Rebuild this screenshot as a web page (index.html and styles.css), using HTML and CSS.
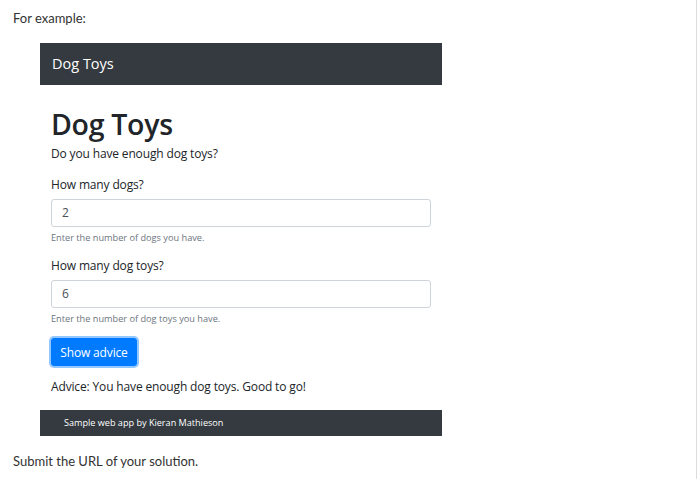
FILE: index.html
```html
<!DOCTYPE html>
<html>
<head>
<meta charset="utf-8">
<link rel="stylesheet" href="styles.css">
</head>
<body>
<div class="page">
  <p class="outer-text top">For example:</p>
  <div class="app">
    <div class="navbar">Dog Toys</div>
    <div class="content">
      <h1 class="title">Dog Toys</h1>
      <p class="lead">Do you have enough dog toys?</p>
      <div class="group">
        <label class="label">How many dogs?</label>
        <div class="input">2</div>
        <div class="help">Enter the number of dogs you have.</div>
      </div>
      <div class="group">
        <label class="label">How many dog toys?</label>
        <div class="input">6</div>
        <div class="help">Enter the number of dog toys you have.</div>
      </div>
      <button class="btn">Show advice</button>
      <p class="advice">Advice: You have enough dog toys. Good to go!</p>
    </div>
    <div class="footer">Sample web app by Kieran Mathieson</div>
  </div>
  <p class="outer-text bottom">Submit the URL of your solution.</p>
</div>
</body>
</html>
```
FILE: styles.css
```css
html, body {
  margin: 0;
  padding: 0;
  background: #fff;
}
.page {
  width: 697px;
  height: 479px;
  box-sizing: border-box;
  border-right: 1px solid #dcdcdc;
  padding-top: 8px;
  font-family: "Lato", "Open Sans", sans-serif;
}
.outer-text {
  margin: 0;
  padding-left: 13px;
  font-size: 13px;
  line-height: 20px;
  color: #333;
}
.app {
  margin-left: 40px;
  width: 402px;
  margin-top: 15px;
  font-family: "Open Sans", "Noto Sans", sans-serif;
  color: #212529;
}
.navbar {
  height: 42px;
  background: #343a40;
  color: #fff;
  font-size: 14.5px;
  line-height: 42px;
  padding-left: 12px;
}
.content {
  padding: 0 11px;
  display: flex;
  flex-direction: column;
  align-items: flex-start;
}
.title {
  margin: 21px 0 0;
  font-size: 28.5px;
  line-height: 36px;
  font-weight: 600;
  letter-spacing: -0.3px;
  color: #212529;
}
.lead {
  margin: 2px 0 0;
  font-size: 12px;
  letter-spacing: -0.15px;
  line-height: 20px;
}
.group {
  margin-top: 11px;
  width: 380px;
}
.label {
  display: block;
  font-size: 12px;
  letter-spacing: -0.15px;
  line-height: 20px;
  margin-bottom: 4px;
}
.input {
  box-sizing: border-box;
  height: 28px;
  width: 380px;
  border: 1px solid #ced4da;
  border-radius: 3px;
  padding-left: 10px;
  font-size: 12px;
  line-height: 26px;
  color: #495057;
}
.help {
  margin-top: 4px;
  font-size: 9.2px;
  line-height: 14px;
  color: #6c757d;
}
.btn {
  margin-top: 12px;
  height: 28px;
  width: 86px;
  border: 1px solid #007bff;
  background: #007bff;
  color: #fff;
  border-radius: 3px;
  font-family: "Open Sans", "Noto Sans", sans-serif;
  font-size: 12px;
  letter-spacing: -0.15px;
  padding: 0;
  box-shadow: 0 0 0 2px rgba(38, 143, 255, 0.5);
}
.advice {
  margin: 11px 0 13px;
  font-size: 12px;
  letter-spacing: -0.15px;
  line-height: 20px;
}
.footer {
  height: 26px;
  background: #343a40;
  color: #fff;
  font-size: 9.1px;
  line-height: 26px;
  padding-left: 24px;
}
.bottom {
  margin-top: 15px;
}
```
